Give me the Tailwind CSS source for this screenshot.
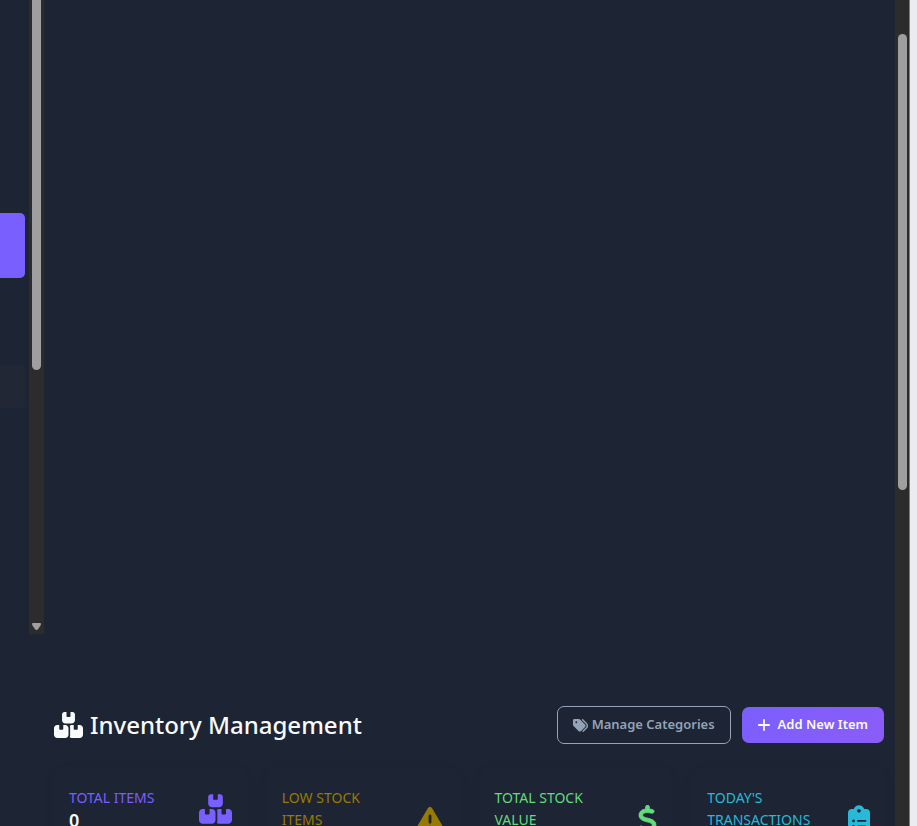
<!DOCTYPE html>
<html lang="en">
<head>
<meta charset="utf-8">
<meta name="viewport" content="width=device-width, initial-scale=1">
<title>Inventory Management</title>
<script src="https://cdn.jsdelivr.net/npm/@tailwindcss/browser@4"></script>
</head>
<body class="flex h-screen overflow-hidden bg-[#1d2433] font-['Noto_Sans','Open_Sans',sans-serif] text-[#f8fafc]">
<svg class="hidden" aria-hidden="true">
  <symbol id="boxes" viewBox="0 0 576 512"><path d="M248 0H208c-26.5 0-48 21.5-48 48V160c0 35.3 28.7 64 64 64H352c35.3 0 64-28.7 64-64V48c0-26.5-21.5-48-48-48H328V80c0 8.8-7.2 16-16 16H264c-8.8 0-16-7.2-16-16V0zM64 256c-35.3 0-64 28.7-64 64V448c0 35.3 28.7 64 64 64H224c35.3 0 64-28.7 64-64V320c0-35.3-28.7-64-64-64H184v80c0 8.8-7.2 16-16 16H120c-8.8 0-16-7.2-16-16V256H64zM352 512H512c35.3 0 64-28.7 64-64V320c0-35.3-28.7-64-64-64H472v80c0 8.8-7.2 16-16 16H408c-8.8 0-16-7.2-16-16V256H352c-15 0-28.8 5.1-39.7 13.8c4.9 10.4 7.7 22 7.7 34.2V464c0 12.2-2.8 23.8-7.7 34.2C323.2 506.9 337 512 352 512z"/></symbol>
</svg>

<nav class="flex w-[29px] shrink-0 flex-col pt-[213px]" aria-label="Sidebar">
  <a href="#" aria-label="Inventory" aria-current="page" class="mr-1 h-[65px] rounded-r-[5px] bg-[#7a5fff]"></a>
  <a href="#" aria-label="Reports" class="mt-[87px] mr-1 h-[43px] rounded-r-[5px] bg-[#212735]"></a>
</nav>
<div class="flex h-[634px] w-[15px] shrink-0 flex-col items-center justify-between bg-[#2c2c2c] pb-1" aria-hidden="true">
  <div class="h-[370px] w-[9px] rounded-b-full bg-[#9f9f9f]"></div>
  <svg class="h-[7px] w-[9px] fill-[#9f9f9f]" viewBox="0 0 9 7"><path d="M1 0H8Q9 0 9 1L8.500 2.500L6 6.300Q4.500 7.500 3 6.300L.5 2.500L0 1Q0 0 1 0Z"/></svg>
</div>

<main class="min-w-0 flex-1 pt-[706px]">
  <header class="flex items-center justify-between pr-[11px] pl-[10px]">
    <h1 class="flex items-center gap-[7px] text-2xl leading-8 font-medium whitespace-nowrap">
      <svg class="h-[26px] w-[29px] fill-current" aria-hidden="true"><use href="#boxes"/></svg>
      Inventory Management
    </h1>
    <div class="flex items-center gap-[11px] text-[13px] font-semibold whitespace-nowrap">
      <button type="button" class="flex h-[38px] items-center gap-1 rounded-[7px] border border-[#94a3b8] px-[15px] text-[#94a3b8]">
        <svg class="size-[15px] fill-current" viewBox="0 0 512 512" aria-hidden="true"><path d="M345 39.1L472.8 168.4c52.4 53 52.4 138.2 0 191.2L360.8 472.9c-9.3 9.4-24.5 9.5-33.9 .2s-9.500-24.500-.2-33.900L438.600 325.900c33.900-34.300 33.900-89.400 0-123.700L310.900 72.900c-9.300-9.400-9.200-24.600 .2-33.900s24.600-9.200 33.900 .2zM0 229.500V80C0 53.500 21.500 32 48 32H197.500c17 0 33.300 6.700 45.300 18.700l168 168c25 25 25 65.500 0 90.500L277.300 442.700c-25 25-65.500 25-90.500 0l-168-168C6.700 262.700 0 246.500 0 229.500zM144 144a32 32 0 1 0 -64 0 32 32 0 1 0 64 0z"/></svg>
        Manage Categories
      </button>
      <button type="button" class="flex h-9 items-center gap-2 rounded-[7px] bg-linear-135 from-[#7a5fff] to-[#8b5cf6] px-4 text-[#f8fafc]">
        <svg class="size-3 stroke-current" viewBox="0 0 12 12" fill="none" stroke-width="1.800" stroke-linecap="round" aria-hidden="true"><path d="M6 .9V11.100M.9 6H11.100"/></svg>
        Add New Item
      </button>
    </div>
  </header>

  <section class="mt-[23px] grid grid-cols-4 text-sm leading-[22px]" aria-label="Stock summary">
    <div class="px-[10px]">
      <article class="h-full rounded-xl px-[15px] py-5 shadow-[0_4px_16px_rgba(0,0,0,0.04)]">
        <div class="flex items-center justify-between">
          <div><h2 class="text-[#7a5fff]">TOTAL ITEMS</h2><p class="text-lg leading-[22px] font-semibold">0</p></div>
          <svg class="h-[30px] w-[33px] shrink-0 fill-[#7a5fff]" aria-hidden="true"><use href="#boxes"/></svg>
        </div>
      </article>
    </div>
    <div class="px-[10px]">
      <article class="h-full rounded-xl px-[15px] py-5 shadow-[0_4px_16px_rgba(0,0,0,0.04)]">
        <div class="flex min-h-[66px] items-center justify-between">
          <h2 class="self-start text-[#997a00]">LOW STOCK<br>ITEMS</h2>
          <svg class="size-[30px] shrink-0 fill-[#997a00]" viewBox="0 0 512 512" aria-hidden="true"><path d="M256 32c14.200 0 27.300 7.500 34.500 19.800l216 368c7.300 12.400 7.300 27.700 .2 40.100S486.300 480 472 480H40c-14.300 0-27.600-7.700-34.700-20.100s-7-27.800 .2-40.100l216-368C228.700 39.500 241.800 32 256 32zm0 128c-13.300 0-24 10.700-24 24V296c0 13.300 10.700 24 24 24s24-10.700 24-24V184c0-13.300-10.700-24-24-24zm32 224a32 32 0 1 0 -64 0 32 32 0 1 0 64 0z"/></svg>
        </div>
      </article>
    </div>
    <div class="px-[10px]">
      <article class="h-full rounded-xl px-[15px] py-5 shadow-[0_4px_16px_rgba(0,0,0,0.04)]">
        <div class="flex min-h-[66px] items-center justify-between">
          <h2 class="self-start text-[#63db7d]">TOTAL STOCK<br>VALUE</h2>
          <svg class="h-[30px] w-[19px] shrink-0 fill-[#63db7d]" viewBox="0 0 320 512" aria-hidden="true"><path d="M160 0c17.700 0 32 14.300 32 32V67.700c1.600 .2 3.100 .4 4.700 .7c.4 .1 .7 .1 1.100 .2l48 8.800c17.400 3.200 28.900 19.900 25.700 37.200s-19.900 28.900-37.200 25.700l-47.500-8.700c-31.300-4.600-58.900-1.500-78.300 6.200s-27.200 18.300-29 28.100c-2 10.700-.5 16.700 1.200 20.400c1.800 3.900 5.500 8.300 12.800 13.200c16.300 10.700 41.300 17.700 73.700 26.300l2.900 .8c28.600 7.600 63.600 16.800 89.600 33.800c14.200 9.300 27.600 21.900 35.900 39.500c8.500 17.900 10.300 37.900 6.400 59.200c-6.900 38-33.100 63.400-65.600 76.700c-13.700 5.600-28.600 9.200-44.400 11V480c0 17.700-14.300 32-32 32s-32-14.300-32-32V445.100c-.4-.1-.9-.1-1.300-.2c-24.600-3.800-64.700-14.300-91.700-26.300c-16.100-7.200-23.400-26.100-16.200-42.200s26.100-23.400 42.200-16.200c20.900 9.300 55.300 18.500 75.200 21.600c31.900 4.700 58.200 2 76-5.300c16.900-6.900 24.600-16.900 26.800-28.900c1.900-10.600 .4-16.700-1.300-20.400c-1.900-4-5.600-8.400-13-13.300c-16.400-10.700-41.500-17.700-74-26.300l-2.800-.7c-28.500-7.600-63.400-16.900-89.400-33.900c-14.200-9.300-27.500-22-35.800-39.600c-8.400-17.900-10.100-37.900-6.100-59.200C23.700 116 52.300 91.200 84.800 78.300c13.300-5.300 27.900-8.900 43.200-11V32c0-17.700 14.300-32 32-32z" stroke="#63db7d" stroke-width="14"/></svg>
        </div>
      </article>
    </div>
    <div class="px-[10px]">
      <article class="h-full rounded-xl px-[15px] py-5 shadow-[0_4px_16px_rgba(0,0,0,0.04)]">
        <div class="flex min-h-[66px] items-center justify-between">
          <h2 class="self-start text-[#28b9d8]">TODAY'S<br>TRANSACTIONS</h2>
          <svg class="h-[30px] w-[22px] shrink-0 fill-[#28b9d8]" viewBox="0 0 384 512" aria-hidden="true"><path d="M192 0c-41.800 0-77.400 26.700-90.500 64H64C28.700 64 0 92.700 0 128V448c0 35.300 28.700 64 64 64H320c35.300 0 64-28.700 64-64V128c0-35.300-28.700-64-64-64H282.500C269.400 26.700 233.800 0 192 0zm0 64a32 32 0 1 1 0 64 32 32 0 1 1 0-64zM72 272a24 24 0 1 1 48 0 24 24 0 1 1 -48 0zm104-16H304c8.800 0 16 7.200 16 16s-7.200 16-16 16H176c-8.800 0-16-7.200-16-16s7.200-16 16-16zM72 368a24 24 0 1 1 48 0 24 24 0 1 1 -48 0zm88 0c0-8.800 7.200-16 16-16H304c8.800 0 16 7.200 16 16s-7.200 16-16 16H176c-8.800 0-16-7.200-16-16z"/></svg>
        </div>
      </article>
    </div>
  </section>
</main>

<div class="flex w-[14px] shrink-0 justify-center bg-[#2c2c2c] pt-[34px]" aria-hidden="true">
  <div class="h-[456px] w-[9px] rounded-full bg-[#9f9f9f]"></div>
</div>
<div class="w-2 shrink-0 border-l border-[#8069e0] bg-[#ececf0]" aria-hidden="true"></div>
</body>
</html>
